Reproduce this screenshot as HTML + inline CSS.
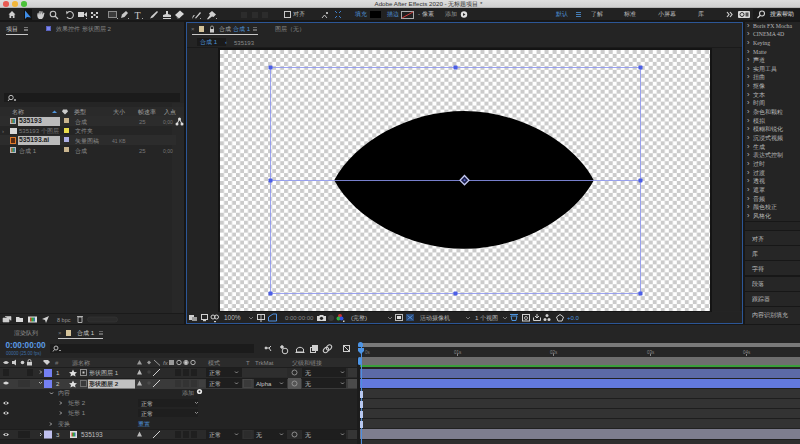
<!DOCTYPE html>
<html><head><meta charset="utf-8">
<style>
*{margin:0;padding:0;box-sizing:border-box}
html,body{width:800px;height:444px;overflow:hidden;background:#171717;font-family:"Liberation Sans",sans-serif;color:#9b9b9b}
.a{position:absolute}
.t{position:absolute;white-space:nowrap;font-size:6.2px;line-height:8px}
.b{color:#4f95dd}
.chk{background:repeating-conic-gradient(#cdcdcd 0 25%,#ffffff 0 50%) 0 0/8px 8px}
</style></head><body>

<!-- title bar -->
<div class="a" style="left:0;top:0;width:800px;height:8px;background:linear-gradient(#dedede,#cdcdcd)"></div><div class="a" style="left:0;top:7px;width:800px;height:1px;background:#b5b5b5"></div>
<div class="a" style="left:3px;top:1px;width:5.6px;height:5.6px;border-radius:50%;background:#e85a52"></div>
<div class="a" style="left:12px;top:1px;width:5.6px;height:5.6px;border-radius:50%;background:#f2b63a"></div>
<div class="a" style="left:21px;top:1px;width:5.6px;height:5.6px;border-radius:50%;background:#4cc23a"></div>
<div class="t" style="left:374.5px;top:-0.5px;font-size:6.2px;line-height:8px;color:#303030">Adobe After Effects 2020 - 无标题项目 *</div>

<!-- toolbar -->
<div class="a" style="left:0;top:8px;width:800px;height:13px;background:#222222"></div>
<div class="a" style="left:0;top:20px;width:800px;height:2px;background:#171717"></div>
<div class="a" style="left:24px;top:9px;width:8px;height:11px;background:#141414"></div>
<div class="a" style="left:753px;top:9px;width:47px;height:11px;background:#1b1b1b"></div>
<svg class="a" style="left:0;top:8px" width="800" height="13" viewBox="0 0 800 13">
 <g fill="#d0d0d0">
  <path d="M8.5,6.5 L12,3 L15.5,6.5 L14.5,6.5 L14.5,10 L12.8,10 L12.8,8 L11.2,8 L11.2,10 L9.5,10 L9.5,6.5Z"/>
 </g>
 <path d="M25,2.5 L25,11 L27,9 L31,9.5Z" fill="#3f8de6"/>
 <path d="M38,10 C37,8 37,5 38.5,4.5 L39,7 L39.5,3 L40.5,3 L40.8,6.5 L41.5,3.2 L42.5,3.3 L42.5,6.8 L43.5,4.5 L44.5,5 L43.5,9 L42,11 L39,11Z" fill="#cfcfcf"/>
 <circle cx="53" cy="6" r="2.8" fill="none" stroke="#c8c8c8" stroke-width="1.1"/><path d="M55,8 L58,11" stroke="#c8c8c8" stroke-width="1.3"/>
 <path d="M67.5,4.5 A3.5,3.5 0 1 1 67,9" fill="none" stroke="#c8c8c8" stroke-width="1.1"/><path d="M66,3 L68.5,4.5 L66.5,6.5Z" fill="#c8c8c8"/>
 <rect x="78" y="4" width="6" height="5" fill="#d6d6d6"/><path d="M84,6.5 L87,4 L87,9Z" fill="#d6d6d6"/><rect x="86" y="10" width="1" height="1" fill="#bbb"/>
 <g fill="#cfcfcf"><rect x="91" y="4" width="2" height="2"/><rect x="96" y="4" width="2" height="2"/><rect x="91" y="8" width="2" height="2"/><rect x="96" y="8" width="2" height="2"/><rect x="93.5" y="6" width="2" height="2"/></g>
 <rect x="108.5" y="3.5" width="8" height="6" fill="#3a3a3a" stroke="#8a8a8a" stroke-width="1"/><rect x="117" y="10" width="1" height="1" fill="#aaa"/>
 <path d="M121,10 L122,6.5 L126,3 L128,5 L124.5,9Z" fill="#c8c8c8"/><rect x="128" y="10" width="1" height="1" fill="#aaa"/>
 <text x="134.5" y="10.5" font-family="Liberation Serif" font-size="10" fill="#c8c8c8">T</text><rect x="142" y="10" width="1" height="1" fill="#aaa"/>
 <path d="M150,10.5 L151.5,8 L157,3 L158,4 L153,9.5Z" fill="#d0d0d0"/>
 <path d="M166,3 L168,3 L168,6 L171,7 L171,9 L163,9 L163,7 L166,6Z" fill="#d0d0d0"/><rect x="163" y="10" width="8" height="1" fill="#d0d0d0"/>
 <path d="M175,7 L180,2.5 L184,6 L179,10.5Z" fill="#d8d8d8"/><path d="M176.5,8.5 L179,10.5 L177,10.5Z" fill="#888"/>
 <path d="M192,11 L194,4 L193,7.5 L195,7 Z M195,10 L200,4 L201,5 L196,10.5Z" fill="#cfcfcf"/><rect x="200" y="10" width="1" height="1" fill="#aaa"/>
 <path d="M207,11 L210,7 L209,5.5 L212,3 L216,6.5 L213.5,9 L212,8.5 L208,11.5Z" fill="#d0d0d0"/><rect x="216" y="10" width="1" height="1" fill="#aaa"/>
 <g fill="#2c2c2c"><rect x="241" y="4" width="6" height="6"/><rect x="252" y="4" width="6" height="6"/><rect x="262" y="4" width="6" height="6"/></g>
 <rect x="284.5" y="3.5" width="6" height="6" fill="none" stroke="#c8c8c8" stroke-width="1"/>
 <path d="M322,10 L324.5,7 L327,10" fill="none" stroke="#c0c0c0" stroke-width="1"/><circle cx="327" cy="5" r="1" fill="#ddd"/>
 <g stroke="#3f7fc8" stroke-width="1"><path d="M335,3 L337,5 M341,3 L339,5 M335,10 L337,8 M341,10 L339,8"/></g>
 <rect x="370" y="3" width="11" height="7" fill="#000"/>
 <rect x="401.5" y="3.5" width="12" height="7" fill="#202020" stroke="#aaa" stroke-width="1"/><path d="M402,10 L413,4" stroke="#d43a3a" stroke-width="1"/>
 <circle cx="464" cy="6.5" r="3.2" fill="#e0e0e0"/><path d="M463,5 L465.5,6.5 L463,8Z" fill="#282828"/>
 <path d="M576,4.5 L581,4.5 M576,6.5 L581,6.5 M576,8.5 L581,8.5" stroke="#4f95dd" stroke-width="0.8"/>
 <path d="M727,4 L729,6.5 L727,9 M730,4 L732,6.5 L730,9" fill="none" stroke="#cfcfcf" stroke-width="1.2"/>
 <rect x="738" y="3" width="12" height="7" fill="#d8d8d8" rx="1"/><circle cx="742" cy="6.5" r="2" fill="none" stroke="#333" stroke-width="1"/><rect x="745.5" y="4.5" width="3" height="4" fill="#555"/>
 <circle cx="762" cy="5.5" r="2.5" fill="none" stroke="#d0d0d0" stroke-width="1.1"/><path d="M760,7.5 L757.5,10" stroke="#d0d0d0" stroke-width="1.3"/>
</g>
</svg>
<div class="t" style="left:293px;top:10px;color:#bdbdbd">对齐</div>
<div class="t b" style="left:355px;top:10px">填充</div>
<div class="t b" style="left:387px;top:10px">描边</div>
<div class="t" style="left:418px;top:10px;color:#bdbdbd">- 像素</div>
<div class="t" style="left:445px;top:10px;color:#9a9a9a">添加</div>
<div class="t b" style="left:556px;top:10px">默认</div>
<div class="t" style="left:591px;top:10px;color:#bdbdbd">了解</div>
<div class="t" style="left:624px;top:10px;color:#bdbdbd">标准</div>
<div class="t" style="left:658px;top:10px;color:#bdbdbd">小屏幕</div>
<div class="t" style="left:698px;top:10px;color:#bdbdbd">库</div>
<div class="t" style="left:769.5px;top:10px;color:#e0e0e0;font-size:6.4px">搜索帮助</div>

<!-- left project panel -->
<div id="proj" class="a" style="left:0;top:22px;width:184px;height:301px;background:#252525"></div><div class="a" style="left:172px;top:103px;width:12px;height:210px;background:#282828"></div>
<div class="t" style="left:6px;top:25px;color:#c8c8c8">项目</div>
<div class="a" style="left:24px;top:27px;width:4px;height:4px;border-top:1px solid #777;border-bottom:1px solid #777"></div>
<div class="a" style="left:24px;top:28.5px;width:4px;height:1px;background:#777"></div>
<div class="a" style="left:6px;top:34px;width:22px;height:1px;background:#c8c8c8"></div>
<div class="a" style="left:46px;top:26px;width:5px;height:5px;background:#7c86f0;border:1px solid #5a63c0"></div>
<div class="t" style="left:56px;top:25px;color:#8a8a8a">效果控件 形状图层 2</div>
<div class="a" style="left:4px;top:93px;width:176px;height:9px;background:#1b1b1b"></div>
<svg class="a" style="left:7px;top:94px" width="12" height="8"><circle cx="4" cy="3.5" r="2.2" fill="none" stroke="#bbb" stroke-width="1"/><path d="M2.5,5 L1,7" stroke="#bbb" stroke-width="1"/><circle cx="8" cy="6" r="1" fill="#bbb"/></svg>
<div class="a" style="left:0;top:107px;width:184px;height:9px;background:#2a2a2a"></div>
<div class="t" style="left:12px;top:107.5px;color:#a0a0a0">名称</div>
<svg class="a" style="left:50px;top:108px" width="20" height="8"><path d="M2,5 L4.5,2.5 L7,5Z" fill="#4f95dd"/><path d="M13,1.5 L17,1.5 L18,3.5 L15,6.5 L12,3.5Z" fill="#ccc"/></svg>
<div class="t" style="left:74px;top:107.5px;color:#a0a0a0">类型</div>
<div class="t" style="left:113px;top:107.5px;color:#a0a0a0">大小</div>
<div class="t" style="left:138px;top:107.5px;color:#a0a0a0">帧速率</div>
<div class="t" style="left:164px;top:107.5px;color:#a0a0a0">入点</div>
<div class="a" style="left:0;top:116px;width:184px;height:10px;background:#2c2c2c"></div>
<div class="a" style="left:0;top:135px;width:176px;height:10px;background:#2c2c2c"></div>
<!-- row1 -->
<div class="a" style="left:10px;top:118px;width:6px;height:6px;background:linear-gradient(90deg,#d65a3c,#3f9a54,#3c6fc4);border:1px solid #bbb"></div>
<div class="a" style="left:18px;top:117px;width:42px;height:9px;background:#bcbcbc"></div>
<div class="t" style="left:19px;top:117px;color:#222;font-weight:bold;font-size:6.8px">535193</div>
<div class="a" style="left:64px;top:118px;width:5px;height:5px;background:#c9b58f"></div>
<div class="t" style="left:75px;top:117.5px;color:#8a8a8a">合成</div>
<div class="t" style="left:139px;top:117.5px;color:#777;font-size:6px">25</div>
<div class="t" style="left:163px;top:117.5px;color:#777;font-size:5px">0;00</div>
<svg class="a" style="left:175px;top:117px" width="9" height="9"><circle cx="4.5" cy="2" r="1.5" fill="#ddd"/><circle cx="2" cy="7" r="1.5" fill="#ddd"/><circle cx="7" cy="7" r="1.5" fill="#ddd"/><path d="M4.5,2 L2,7 M4.5,2 L7,7" stroke="#ddd"/></svg>
<!-- row2 -->
<div class="t" style="left:2px;top:127px;color:#777;font-size:6px">›</div>
<div class="a" style="left:10px;top:128px;width:7px;height:6px;background:#d8d8d8"></div>
<div class="t" style="left:19px;top:127px;color:#7a7a7a;font-size:6px">535193 个图层</div>
<div class="a" style="left:64px;top:128px;width:5px;height:5px;background:#e8dc4c"></div>
<div class="t" style="left:75px;top:127px;color:#8a8a8a">文件夹</div>
<!-- row3 -->
<div class="a" style="left:10px;top:137px;width:6px;height:7px;background:#5a2a10;border:1px solid #e07a2a"></div>
<div class="a" style="left:18px;top:136px;width:42px;height:9px;background:#bcbcbc"></div>
<div class="t" style="left:19px;top:136px;color:#222;font-weight:bold;font-size:6.8px">535193.ai</div>
<div class="a" style="left:64px;top:137px;width:5px;height:5px;background:#aeb0e6"></div>
<div class="t" style="left:75px;top:136.5px;color:#8a8a8a">矢量图稿</div>
<div class="t" style="left:112px;top:137px;color:#777;font-size:5px">41 KB</div>
<!-- row4 -->
<div class="a" style="left:10px;top:147px;width:6px;height:6px;background:linear-gradient(90deg,#d65a3c,#3f9a54,#3c6fc4);border:1px solid #bbb"></div>
<div class="t" style="left:19px;top:146.5px;color:#8a8a8a">合成 1</div>
<div class="a" style="left:64px;top:147px;width:5px;height:5px;background:#c9b58f"></div>
<div class="t" style="left:75px;top:146.5px;color:#8a8a8a">合成</div>
<div class="t" style="left:139px;top:146.5px;color:#777;font-size:6px">25</div>
<div class="t" style="left:163px;top:146.5px;color:#777;font-size:5px">0;00</div>
<!-- bottom toolbar -->
<div class="a" style="left:0;top:313px;width:184px;height:11px;background:#242424;border-top:1px solid #1a1a1a"></div>
<svg class="a" style="left:0;top:313.5px" width="184" height="10">
 <path d="M3,4 L9,4 L9,8 L3,8Z M5,2.5 L11,2.5 L11,6.5" fill="#cfcfcf" stroke="#cfcfcf" stroke-width="0.6"/>
 <path d="M16,3 L19,3 L20,4 L23,4 L23,8 L16,8Z" fill="#d8d8d8"/>
 <rect x="28" y="2.5" width="9" height="6" fill="#ddd"/><rect x="30" y="3.5" width="5" height="4" fill="url(#rgb)"/>
 <defs><linearGradient id="rgb"><stop offset="0" stop-color="#d33"/><stop offset=".5" stop-color="#3a3"/><stop offset="1" stop-color="#36c"/></linearGradient></defs>
 <path d="M42,5 L49,2 L46,9 L45,6Z" fill="#d0d0d0"/>
 <text x="57" y="7.5" font-size="5.5" fill="#999" font-family="Liberation Sans">8 bpc</text>
 <path d="M78,3 L82,3 L82,8.5 L78,8.5Z M77,2.5 L83,2.5" fill="none" stroke="#bbb" stroke-width="0.9"/>
 <rect x="87.5" y="3" width="30" height="5" rx="2.5" fill="#2b2b2b" stroke="#363636" stroke-width="0.6"/>
</svg>

<!-- comp panel -->
<div id="comp" class="a" style="left:186px;top:22px;width:557px;height:302px;background:#242424;border:1px solid #2c5696"></div>
<div class="a" style="left:187px;top:48px;width:555px;height:263px;background:#232323"></div><div class="a" style="left:740px;top:48px;width:2px;height:263px;background:#1e1e1e"></div>
<div class="a" style="left:218px;top:48px;width:494px;height:265px;background:#141414"></div>
<svg class="a" style="left:220px;top:50px" width="490" height="261"><defs><pattern id="ck" x="0" y="0" width="8.014" height="7.94" patternUnits="userSpaceOnUse"><rect width="8.014" height="7.94" fill="#fff"/><rect x="4.007" y="0" width="4.007" height="3.97" fill="#cbcbcb"/><rect x="0" y="3.97" width="4.007" height="3.97" fill="#cbcbcb"/></pattern></defs><rect width="490" height="261" fill="url(#ck)"/></svg>
<div class="a" style="left:187px;top:47px;width:555px;height:1px;background:#1a1a1a"></div>
<div class="t" style="left:191px;top:25px;color:#777;font-size:6px">×</div>
<div class="a" style="left:199px;top:26px;width:5px;height:6px;background:#d6c49a"></div>
<svg class="a" style="left:209px;top:25px" width="6" height="8"><path d="M1.5,4 L1.5,2.5 A1.5,1.5 0 0 1 4.5,2.5 L4.5,4" fill="none" stroke="#bbb" stroke-width="0.8"/><rect x="1" y="4" width="4" height="3.5" fill="#ccc"/></svg>
<div class="t" style="left:219px;top:25px;color:#a8a8a8">合成</div>
<div class="t b" style="left:233px;top:25px">合成 1</div>
<div class="a" style="left:253px;top:27px;width:4px;height:4px;border-top:1px solid #666;border-bottom:1px solid #666"></div>
<div class="a" style="left:253px;top:28.5px;width:4px;height:1px;background:#666"></div>
<div class="a" style="left:192px;top:34px;width:66px;height:1px;background:#c8c8c8"></div>
<div class="t" style="left:275px;top:25px;color:#8a8a8a">图层（无）</div>
<div class="a" style="left:197px;top:38px;width:29px;height:8px;background:#1a1a1a"></div>
<div class="t b" style="left:200px;top:38px">合成 1</div>
<div class="t b" style="left:225px;top:38px;font-size:6px">‹</div>
<div class="t" style="left:234px;top:38.5px;color:#8a8a8a;font-size:6px">535193</div>
<!-- viewer toolbar -->
<div class="a" style="left:187px;top:312px;width:555px;height:11px;background:#232323"></div>
<svg class="a" style="left:187px;top:311.5px" width="555" height="11">
 <g fill="#cfcfcf" stroke="none">
  <path d="M2,3 L7,3 L7,8 L2,8Z"/><path d="M5,5 L10,5 L10,9 L5,9Z" fill="#9a9a9a"/>
  <rect x="14.5" y="2.5" width="6" height="5" fill="none" stroke="#cfcfcf" stroke-width="1"/><rect x="16" y="8" width="3" height="1.2"/>
  <circle cx="26" cy="5" r="2" fill="none" stroke="#cfcfcf" stroke-width="1"/><circle cx="29.5" cy="5" r="2" fill="none" stroke="#cfcfcf" stroke-width="1"/><rect x="27" y="9" width="2" height="1.2"/>
 </g>
 <path d="M62,5 L64,7 L66,5" fill="none" stroke="#8a8a8a" stroke-width="0.8"/>
 <rect x="70.5" y="2.5" width="7" height="5" fill="none" stroke="#cfcfcf" stroke-width="1"/><path d="M74,2.5 L74,7.5" stroke="#cfcfcf" stroke-width="0.8"/><rect x="73" y="8.5" width="2" height="1" fill="#ccc"/>
 <path d="M81.5,9 L81.5,5 L86,2 L89.5,2 L89.5,9Z" fill="none" stroke="#4f8fdd" stroke-width="1"/>
 <path d="M130,4 L132,4 L133,3 L136,3 L137,4 L139,4 L139,9 L130,9Z" fill="#d8d8d8"/><circle cx="134.5" cy="6.3" r="1.6" fill="#232323"/>
 <circle cx="144" cy="6" r="3" fill="#3a3a3a"/>
 <circle cx="153" cy="4" r="2" fill="#d03030"/><circle cx="151.5" cy="6.5" r="2" fill="#30b040"/><circle cx="154.5" cy="6.5" r="2" fill="#3050e0"/><rect x="156" y="8.5" width="1.5" height="1.5" fill="#ccc"/>
 <path d="M201,5 L203,7 L205,5" fill="none" stroke="#8a8a8a" stroke-width="0.8"/>
 <rect x="208.5" y="2.5" width="7" height="6" fill="none" stroke="#bbb" stroke-width="1"/><rect x="210" y="4" width="4" height="3" fill="#ddd"/>
 <rect x="219" y="2" width="8" height="7" fill="#2a4a78"/><path d="M220.5,3.5 L225.5,7.5 M225.5,3.5 L220.5,7.5" stroke="#5fa0e8" stroke-width="0.8"/>
 <path d="M279,5 L281,7 L283,5" fill="none" stroke="#8a8a8a" stroke-width="0.8"/>
 <path d="M316,5 L318,7 L320,5" fill="none" stroke="#8a8a8a" stroke-width="0.8"/>
 <path d="M323,2.5 L331,2.5 M324,4 L330,4 L329,8.5 L325,8.5Z" fill="none" stroke="#4f95dd" stroke-width="1"/>
 <rect x="335.5" y="2.5" width="7" height="6.5" fill="none" stroke="#d0d0d0" stroke-width="1"/><circle cx="339" cy="6" r="1.5" fill="none" stroke="#d0d0d0" stroke-width="0.8"/>
 <path d="M346.5,5.5 L346.5,8.5 L353.5,8.5 L353.5,5.5 M350,2 L350,6 M348,4 L350,6 L352,4" fill="none" stroke="#d0d0d0" stroke-width="1"/>
 <circle cx="360" cy="3.5" r="1.5" fill="#d0d0d0"/><circle cx="358" cy="7.5" r="1.5" fill="#d0d0d0"/><circle cx="362" cy="7.5" r="1.5" fill="#d0d0d0"/>
 <path d="M373,2.5 L376.5,5 L375,9 L371,9 L369.5,5Z" fill="none" stroke="#d0d0d0" stroke-width="1"/>
</svg>
<div class="t" style="left:224px;top:313.5px;color:#bbb;font-size:6.5px">100%</div>
<div class="t" style="left:285px;top:313.5px;color:#8a8a8a;font-size:6px">0:00:00:00</div>
<div class="t" style="left:351px;top:313.5px;color:#bbb">(完整)</div>
<div class="t" style="left:420px;top:313.5px;color:#bbb">活动摄像机</div>
<div class="t" style="left:475px;top:313.5px;color:#bbb">1 个视图</div>
<div class="t b" style="left:567px;top:313.5px;font-size:6px">+0.0</div>
<svg class="a" style="left:0;top:0" width="800" height="444">
<path d="M334.2,180.2 C354.8,141.5 409.2,111 464,111 C518.8,111 573.2,141.5 593.8,180.2 C573.2,218.6 518.8,248.8 464,248.8 C409.2,248.8 354.8,218.6 334.2,180.2 Z" fill="#000"/>
<g stroke="#8c95f0" stroke-opacity="0.85" stroke-width="1" fill="none">
<rect x="270.5" y="67.5" width="370" height="226"/>
<line x1="270.5" y1="180.5" x2="640.5" y2="180.5"/>
</g>
<g fill="#4b5ee6">
<rect x="268.5" y="65.5" width="4" height="4" rx="0.8"/><rect x="453.5" y="65.5" width="4" height="4" rx="0.8"/><rect x="638.5" y="65.5" width="4" height="4" rx="0.8"/>
<rect x="268.5" y="178.5" width="4" height="4" rx="0.8"/><rect x="638.5" y="178.5" width="4" height="4" rx="0.8"/>
<rect x="268.5" y="291.5" width="4" height="4" rx="0.8"/><rect x="453.5" y="291.5" width="4" height="4" rx="0.8"/><rect x="638.5" y="291.5" width="4" height="4" rx="0.8"/>
</g>
<path d="M464.5,175.5 L469,180.2 L464.5,184.8 L460,180.2 Z" fill="#1a1f4a" stroke="#c4c8f2" stroke-width="1.3"/><circle cx="464.5" cy="180.2" r="1" fill="#5a66d0"/>
</svg>

<!-- right panel -->
<div id="right" class="a" style="left:745px;top:22px;width:55px;height:199px;background:#242424"></div>
<div class="a" style="left:745px;top:222px;width:55px;height:8px;background:#232323"></div>
<div class="t" style="left:747px;top:21.5px;color:#bbbbbb;font-size:7.5px">›</div>
<div class="t" style="left:753px;top:21.5px;color:#b8b8b8;font-size:5.8px;font-family:'Liberation Serif',serif">Boris FX Mocha</div>
<div class="t" style="left:747px;top:30.1px;color:#bbbbbb;font-size:7.5px">›</div>
<div class="t" style="left:753px;top:30.1px;color:#b8b8b8;font-size:5.8px;font-family:'Liberation Serif',serif">CINEMA 4D</div>
<div class="t" style="left:747px;top:38.8px;color:#bbbbbb;font-size:7.5px">›</div>
<div class="t" style="left:753px;top:38.8px;color:#b8b8b8;font-size:5.8px;font-family:'Liberation Serif',serif">Keying</div>
<div class="t" style="left:747px;top:47.5px;color:#bbbbbb;font-size:7.5px">›</div>
<div class="t" style="left:753px;top:47.5px;color:#b8b8b8;font-size:5.8px;font-family:'Liberation Serif',serif">Matte</div>
<div class="t" style="left:747px;top:56.1px;color:#bbbbbb;font-size:7.5px">›</div>
<div class="t" style="left:753px;top:56.1px;color:#b8b8b8;font-size:5.8px;font-family:'Liberation Serif',serif">声道</div>
<div class="t" style="left:747px;top:64.7px;color:#bbbbbb;font-size:7.5px">›</div>
<div class="t" style="left:753px;top:64.7px;color:#b8b8b8;font-size:5.8px;font-family:'Liberation Serif',serif">实用工具</div>
<div class="t" style="left:747px;top:73.4px;color:#bbbbbb;font-size:7.5px">›</div>
<div class="t" style="left:753px;top:73.4px;color:#b8b8b8;font-size:5.8px;font-family:'Liberation Serif',serif">扭曲</div>
<div class="t" style="left:747px;top:82.1px;color:#bbbbbb;font-size:7.5px">›</div>
<div class="t" style="left:753px;top:82.1px;color:#b8b8b8;font-size:5.8px;font-family:'Liberation Serif',serif">抠像</div>
<div class="t" style="left:747px;top:90.7px;color:#bbbbbb;font-size:7.5px">›</div>
<div class="t" style="left:753px;top:90.7px;color:#b8b8b8;font-size:5.8px;font-family:'Liberation Serif',serif">文本</div>
<div class="t" style="left:747px;top:99.4px;color:#bbbbbb;font-size:7.5px">›</div>
<div class="t" style="left:753px;top:99.4px;color:#b8b8b8;font-size:5.8px;font-family:'Liberation Serif',serif">时间</div>
<div class="t" style="left:747px;top:108.0px;color:#bbbbbb;font-size:7.5px">›</div>
<div class="t" style="left:753px;top:108.0px;color:#b8b8b8;font-size:5.8px;font-family:'Liberation Serif',serif">杂色和颗粒</div>
<div class="t" style="left:747px;top:116.7px;color:#bbbbbb;font-size:7.5px">›</div>
<div class="t" style="left:753px;top:116.7px;color:#b8b8b8;font-size:5.8px;font-family:'Liberation Serif',serif">模拟</div>
<div class="t" style="left:747px;top:125.3px;color:#bbbbbb;font-size:7.5px">›</div>
<div class="t" style="left:753px;top:125.3px;color:#b8b8b8;font-size:5.8px;font-family:'Liberation Serif',serif">模糊和锐化</div>
<div class="t" style="left:747px;top:133.9px;color:#bbbbbb;font-size:7.5px">›</div>
<div class="t" style="left:753px;top:133.9px;color:#b8b8b8;font-size:5.8px;font-family:'Liberation Serif',serif">沉浸式视频</div>
<div class="t" style="left:747px;top:142.6px;color:#bbbbbb;font-size:7.5px">›</div>
<div class="t" style="left:753px;top:142.6px;color:#b8b8b8;font-size:5.8px;font-family:'Liberation Serif',serif">生成</div>
<div class="t" style="left:747px;top:151.3px;color:#bbbbbb;font-size:7.5px">›</div>
<div class="t" style="left:753px;top:151.3px;color:#b8b8b8;font-size:5.8px;font-family:'Liberation Serif',serif">表达式控制</div>
<div class="t" style="left:747px;top:159.9px;color:#bbbbbb;font-size:7.5px">›</div>
<div class="t" style="left:753px;top:159.9px;color:#b8b8b8;font-size:5.8px;font-family:'Liberation Serif',serif">过时</div>
<div class="t" style="left:747px;top:168.6px;color:#bbbbbb;font-size:7.5px">›</div>
<div class="t" style="left:753px;top:168.6px;color:#b8b8b8;font-size:5.8px;font-family:'Liberation Serif',serif">过渡</div>
<div class="t" style="left:747px;top:177.2px;color:#bbbbbb;font-size:7.5px">›</div>
<div class="t" style="left:753px;top:177.2px;color:#b8b8b8;font-size:5.8px;font-family:'Liberation Serif',serif">透视</div>
<div class="t" style="left:747px;top:185.8px;color:#bbbbbb;font-size:7.5px">›</div>
<div class="t" style="left:753px;top:185.8px;color:#b8b8b8;font-size:5.8px;font-family:'Liberation Serif',serif">遮罩</div>
<div class="t" style="left:747px;top:194.5px;color:#bbbbbb;font-size:7.5px">›</div>
<div class="t" style="left:753px;top:194.5px;color:#b8b8b8;font-size:5.8px;font-family:'Liberation Serif',serif">音频</div>
<div class="t" style="left:747px;top:203.2px;color:#bbbbbb;font-size:7.5px">›</div>
<div class="t" style="left:753px;top:203.2px;color:#b8b8b8;font-size:5.8px;font-family:'Liberation Serif',serif">颜色校正</div>
<div class="t" style="left:747px;top:211.8px;color:#bbbbbb;font-size:7.5px">›</div>
<div class="t" style="left:753px;top:211.8px;color:#b8b8b8;font-size:5.8px;font-family:'Liberation Serif',serif">风格化</div>
<div class="a" style="left:745px;top:231.0px;width:55px;height:14px;background:#262626"></div>
<div class="t" style="left:752px;top:234.5px;color:#c0c0c0">对齐</div>
<div class="a" style="left:745px;top:246.2px;width:55px;height:14px;background:#262626"></div>
<div class="t" style="left:752px;top:249.7px;color:#c0c0c0">库</div>
<div class="a" style="left:745px;top:261.4px;width:55px;height:14px;background:#262626"></div>
<div class="t" style="left:752px;top:264.9px;color:#c0c0c0">字符</div>
<div class="a" style="left:745px;top:276.6px;width:55px;height:14px;background:#262626"></div>
<div class="t" style="left:752px;top:280.1px;color:#c0c0c0">段落</div>
<div class="a" style="left:745px;top:291.8px;width:55px;height:14px;background:#262626"></div>
<div class="t" style="left:752px;top:295.3px;color:#c0c0c0">跟踪器</div>
<div class="a" style="left:745px;top:307.0px;width:55px;height:17px;background:#262626"></div>
<div class="t" style="left:752px;top:310.5px;color:#c0c0c0">内容识别填充</div>

<!-- timeline -->
<div id="tl" class="a" style="left:0;top:325px;width:800px;height:119px;background:#252525"></div>
<div class="t" style="left:14px;top:329px;color:#9a9a9a">渲染队列</div>
<div class="t" style="left:58px;top:329px;color:#777;font-size:6px">×</div>
<div class="a" style="left:66px;top:330px;width:5px;height:6px;background:#d6c49a"></div>
<div class="t" style="left:77px;top:329px;color:#c8c8c8">合成 1</div>
<div class="a" style="left:99px;top:331px;width:4px;height:4px;border-top:1px solid #666;border-bottom:1px solid #666"></div>
<div class="a" style="left:99px;top:332.5px;width:4px;height:1px;background:#666"></div>
<div class="a" style="left:58px;top:338px;width:45px;height:1px;background:#c8c8c8"></div>
<div class="t" style="left:5.5px;top:341px;color:#5b9be6;font-size:8.2px;line-height:10px;font-weight:bold">0:00:00:00</div>
<div class="t" style="left:6px;top:350.5px;color:#3f6fa8;font-size:4.5px;line-height:5px">00000 (25.00 fps)</div>
<div class="a" style="left:50px;top:344px;width:204px;height:9px;background:#1b1b1b"></div>
<svg class="a" style="left:52px;top:345px" width="12" height="8"><circle cx="4" cy="3" r="2" fill="none" stroke="#bbb" stroke-width="1"/><path d="M2.5,4.5 L1,6.5" stroke="#bbb" stroke-width="1"/><path d="M7,5 L8,6 L9,5" fill="none" stroke="#bbb" stroke-width="0.8"/></svg>
<svg class="a" style="left:255px;top:341.5px" width="103" height="17">
 <g fill="none" stroke="#cfcfcf" stroke-width="1">
  <path d="M10,6 L14,6 L16,9 M14,6 L16,4"/><circle cx="11" cy="6" r="1" fill="#cfcfcf"/>
  <circle cx="30" cy="9" r="2.8"/><circle cx="27" cy="5" r="1.3" fill="#cfcfcf"/>
  <path d="M41.5,10 L41.5,7 Q45,3.5 48.5,7 L48.5,10Z"/><path d="M40.5,10.5 L49.5,10.5"/>
  <rect x="55.5" y="5.5" width="5" height="5"/><rect x="57.5" y="3.5" width="5" height="5" fill="#cfcfcf"/>
  <ellipse cx="71" cy="8" rx="2.2" ry="3" transform="rotate(45 71 8)"/><ellipse cx="74" cy="5.5" rx="2.2" ry="3" transform="rotate(45 74 5.5)"/>
  <rect x="88.5" y="3.5" width="6" height="6"/><path d="M89,4 L94,9"/>
 </g>
</svg>
<!-- header row -->
<div class="a" style="left:0;top:358px;width:357px;height:9px;background:#2b2b2b"></div>
<svg class="a" style="left:0;top:358px" width="357" height="9">
 <g fill="#cfcfcf">
  <path d="M3,4.5 Q6,1.5 9,4.5 Q6,7.5 3,4.5Z"/>
  <path d="M12,3 L14,3 L16,1.5 L16,7.5 L14,6 L12,6Z"/>
  <circle cx="22.5" cy="4.5" r="1.8"/>
  <rect x="27" y="4" width="5" height="3.5"/>
  <path d="M44,2 L48,2 L50,4 L47,7 L43,3Z"/>
 </g>
 <path d="M28,4 L28,3 A1.5,1.5 0 0 1 31,3 L31,4" fill="none" stroke="#cfcfcf" stroke-width="0.8"/>
 <g fill="#9a9a9a"><path d="M137,6.5 L139.5,2 L142,6.5Z"/><path d="M147,4.5 L149,2.5 L151,4.5 L149,6.5Z"/><path d="M154,2 L160,7.5" stroke="#9a9a9a" stroke-width="1"/>
 <rect x="169" y="2" width="5" height="5"/></g>
 <g fill="none" stroke="#bbb" stroke-width="0.9"><circle cx="179" cy="4.5" r="2.2"/><circle cx="186" cy="4.5" r="2.2"/><circle cx="193" cy="4.5" r="2.2"/></g>
 <circle cx="186" cy="4.5" r="1.6" fill="#ccc"/>
</svg>
<div class="t" style="left:55px;top:358.5px;color:#777;font-size:6px">#</div>
<div class="t" style="left:72px;top:358.5px;color:#8a8a8a">源名称</div>
<div class="t" style="left:163px;top:358.5px;color:#9a9a9a;font-size:6px;font-style:italic">fx</div>
<div class="t" style="left:208px;top:358.5px;color:#8a8a8a">模式</div>
<div class="t" style="left:246px;top:358.5px;color:#8a8a8a;font-size:6px">T</div>
<div class="t" style="left:255px;top:358.5px;color:#8a8a8a;font-size:6px">TrkMat</div>
<div class="t" style="left:292px;top:358.5px;color:#8a8a8a">父级和链接</div>
<!-- layer rows left -->
<div class="a" style="left:0;top:367px;width:357px;height:11px;background:#2a2a2a;border-top:1px solid #1d1d1d"></div>
<div class="a" style="left:0;top:378px;width:357px;height:11px;background:#3a3a3a;border-top:1px solid #1d1d1d"></div>
<div class="a" style="left:0;top:389px;width:357px;height:55px;background:#232323"></div>
<div class="a" style="left:0;top:429px;width:357px;height:10px;background:#2a2a2a;border-top:1px solid #1d1d1d"></div>
<div class="a" style="left:0;top:439px;width:357px;height:5px;background:#232323;border-top:1px solid #1d1d1d"></div>
<svg class="a" style="left:0;top:367px" width="357" height="77">
 <g fill="#1f1f1f">
  <rect x="3" y="2" width="6" height="7"/><rect x="27" y="2" width="6" height="7"/>
  <rect x="18" y="13" width="6" height="7" fill="#333"/><rect x="24" y="13" width="6" height="7" fill="#333"/>
  <rect x="18" y="64" width="6" height="7"/><rect x="24" y="64" width="6" height="7"/>
 </g>
 <g fill="#d8d8d8">
  <path d="M3,16 Q6,13 9,16 Q6,19 3,16Z"/>
  <path d="M3,36 Q6,33 9,36 Q6,39 3,36Z"/><circle cx="6" cy="36" r="1" fill="#222"/>
  <path d="M3,46 Q6,43 9,46 Q6,49 3,46Z"/><circle cx="6" cy="46" r="1" fill="#222"/>
  <path d="M3,67.5 Q6,64.5 9,67.5 Q6,70.5 3,67.5Z"/><circle cx="6" cy="67.5" r="1" fill="#222"/>
 </g>
 <g fill="none" stroke="#b4b4b4" stroke-width="1">
  <path d="M40,3.5 L41.5,5 L40,6.5"/><path d="M39,15 L40.5,16.5 L42,15"/>
  <path d="M50,25.5 L51.5,27 L53,25.5"/><path d="M60,34.5 L61.5,36 L60,37.5"/><path d="M60,44.5 L61.5,46 L60,47.5"/>
  <path d="M50,55.5 L51.5,57 L50,58.5"/><path d="M40,66 L41.5,67.5 L40,69"/>
 </g>
 <rect x="44" y="2" width="8" height="8" fill="#7580f2"/>
 <rect x="44" y="13" width="8" height="8" fill="#7580f2"/>
 <rect x="44" y="63.5" width="8" height="8" fill="#c0c0ee"/>
 <g fill="#e0e0e0">
  <path d="M73,2.5 L74.2,5 L77,5.2 L75,7 L75.6,9.5 L73,8.2 L70.4,9.5 L71,7 L69,5.2 L71.8,5Z"/>
  <path d="M73,13.5 L74.2,16 L77,16.2 L75,18 L75.6,20.5 L73,19.2 L70.4,20.5 L71,18 L69,16.2 L71.8,16Z"/>
 </g>
 <rect x="80.5" y="2.5" width="6" height="6" fill="none" stroke="#999" stroke-width="0.9"/><rect x="82.5" y="4.5" width="2" height="2" fill="#ccc"/>
 <rect x="80.5" y="13.5" width="6" height="6" fill="none" stroke="#777" stroke-width="0.9"/>
 <rect x="70" y="64" width="7" height="7" fill="#ddd"/><rect x="71.5" y="65.5" width="4" height="4" fill="url(#rgb2)"/>
 <defs><linearGradient id="rgb2"><stop offset="0" stop-color="#d33"/><stop offset=".5" stop-color="#3a3"/><stop offset="1" stop-color="#36c"/></linearGradient></defs>
 <!-- name highlight -->
 <rect x="88" y="12.5" width="47" height="9" fill="#c2c2c2"/>
 <!-- switches -->
 <g fill="#bbb"><path d="M137,7.5 L139.5,2.5 L142,7.5Z"/><path d="M137,18.5 L139.5,13.5 L142,18.5Z"/><path d="M137,69.5 L139.5,64.5 L142,69.5Z"/></g>
 <g fill="#3e3e3e"><circle cx="149" cy="5" r="1.8"/><circle cx="149" cy="16" r="1.8" fill="#4a4a4a"/></g>
 <g stroke="#d0d0d0" stroke-width="1"><path d="M153,9 L160,2"/><path d="M153,20 L160,13"/><path d="M153,71 L160,64"/></g>
 <g fill="#1f1f1f">
  <rect x="175" y="2" width="6" height="7"/><rect x="183" y="2" width="6" height="7"/><rect x="191" y="2" width="6" height="7"/>
  <rect x="175" y="13" width="6" height="7" fill="#333"/><rect x="183" y="13" width="6" height="7" fill="#333"/><rect x="191" y="13" width="6" height="7" fill="#333"/><rect x="199" y="13" width="6" height="7" fill="#3f3f3f"/>
  <rect x="175" y="64" width="6" height="7"/><rect x="183" y="64" width="6" height="7"/><rect x="191" y="64" width="6" height="7"/>
 </g>
 <!-- mode dropdowns -->
 <g fill="#1e1e1e"><rect x="206" y="1" width="36" height="9"/><rect x="206" y="12" width="36" height="9"/><rect x="206" y="63" width="36" height="9"/>
  <rect x="138" y="32" width="60" height="8"/><rect x="138" y="42" width="60" height="8"/>
  <rect x="302" y="1" width="44" height="9"/><rect x="302" y="12" width="44" height="9"/><rect x="302" y="63" width="44" height="9"/>
  <rect x="254" y="12" width="33" height="9"/><rect x="254" y="63" width="33" height="9"/>
  <rect x="242" y="1" width="45" height="9" fill="#2e2e2e"/>
 </g>
 <rect x="243.5" y="12.5" width="8.5" height="8" fill="#3a3a3a" stroke="#4a4a4a" stroke-width="0.8"/>
 <rect x="243.5" y="63.5" width="8.5" height="8" fill="#2c2c2c" stroke="#333" stroke-width="0.8"/>
 <rect x="288" y="11" width="13" height="11" fill="#555"/>
 <g fill="none" stroke="#999" stroke-width="0.9"><circle cx="294.5" cy="5.5" r="2.5"/><circle cx="294.5" cy="16.5" r="2.5"/><circle cx="294.5" cy="67.5" r="2.5"/></g>
 <g fill="none" stroke="#aaa" stroke-width="0.8">
  <path d="M235,4.5 L236.5,6 L238,4.5"/><path d="M235,15.5 L236.5,17 L238,15.5"/><path d="M235,66.5 L236.5,68 L238,66.5"/>
  <path d="M195,35 L196.5,36.5 L198,35"/><path d="M195,45 L196.5,46.5 L198,45"/>
  <path d="M280,15.5 L281.5,17 L283,15.5"/><path d="M280,66.5 L281.5,68 L283,66.5"/>
  <path d="M341,4.5 L342.5,6 L344,4.5"/><path d="M341,15.5 L342.5,17 L344,15.5"/><path d="M341,66.5 L342.5,68 L344,66.5"/>
 </g>
 <rect x="348" y="1" width="9" height="9" fill="#353535"/><rect x="348" y="12" width="9" height="9" fill="#4a4a4a"/><rect x="348" y="63" width="9" height="9" fill="#353535"/>
 <circle cx="199.5" cy="24.5" r="2.6" fill="#e8e8e8"/><circle cx="199.5" cy="24.5" r="1" fill="#333"/>
</svg>
<div class="t" style="left:56px;top:369px;color:#c8c8c8">1</div>
<div class="t" style="left:89px;top:369px;color:#bdbdbd">形状图层 1</div>
<div class="t" style="left:56px;top:380px;color:#c8c8c8">2</div>
<div class="t" style="left:89px;top:380px;color:#2a2a2a;font-weight:bold">形状图层 2</div>
<div class="t" style="left:58px;top:389px;color:#8c8c8c">内容</div>
<div class="t" style="left:68px;top:399px;color:#8c8c8c">矩形 2</div>
<div class="t" style="left:68px;top:409px;color:#8c8c8c">矩形 1</div>
<div class="t" style="left:58px;top:420px;color:#8c8c8c">变换</div>
<div class="t" style="left:56px;top:430.5px;color:#c8c8c8">3</div>
<div class="t" style="left:81px;top:430.5px;color:#bdbdbd;font-size:6.5px">535193</div>
<div class="t" style="left:182px;top:389px;color:#8c8c8c">添加</div>
<div class="t" style="left:141px;top:399.5px;color:#c8c8c8">正常</div>
<div class="t" style="left:141px;top:409.5px;color:#c8c8c8">正常</div>
<div class="t b" style="left:138px;top:420px">重置</div>
<div class="t" style="left:209px;top:369px;color:#c8c8c8">正常</div>
<div class="t" style="left:209px;top:380px;color:#c8c8c8">正常</div>
<div class="t" style="left:209px;top:431px;color:#c8c8c8">正常</div>
<div class="t" style="left:256px;top:380px;color:#c8c8c8;font-size:6px">Alpha</div>
<div class="t" style="left:256px;top:431px;color:#c8c8c8">无</div>
<div class="t" style="left:305px;top:369px;color:#c8c8c8">无</div>
<div class="t" style="left:305px;top:380px;color:#c8c8c8">无</div>
<div class="t" style="left:305px;top:431px;color:#c8c8c8">无</div>
<!-- graph -->
<div class="a" style="left:357px;top:340px;width:443px;height:104px;background:#252525"></div><div class="a" style="left:357px;top:357px;width:3px;height:87px;background:#1c1c1c"></div>
<div class="a" style="left:360px;top:342.5px;width:440px;height:4.5px;background:#7a7a7a"></div>
<div class="a" style="left:358px;top:341.5px;width:5px;height:6px;border-radius:3px;background:#4d95e6"></div>
<div class="a" style="left:358px;top:347px;width:442px;height:11px;background:#262626"></div>
<div class="a" style="left:360px;top:357px;width:440px;height:8px;background:#6e6e6e"></div>
<div class="a" style="left:360px;top:365px;width:440px;height:2px;background:#3a9e3a"></div>
<div class="a" style="left:360px;top:367.5px;width:440px;height:10.5px;background:#5c6aa6;border-top:1px solid #222"></div>
<div class="a" style="left:360px;top:378px;width:440px;height:11px;background:#6279de;border-top:1px solid #222"></div>
<div class="a" style="left:360px;top:388px;width:440px;height:10px;background:#333333;border-top:1px solid #1e1e1e"></div>
<div class="a" style="left:360px;top:398px;width:440px;height:10px;background:#333333;border-top:1px solid #1e1e1e"></div>
<div class="a" style="left:360px;top:408px;width:440px;height:10px;background:#333333;border-top:1px solid #1e1e1e"></div>
<div class="a" style="left:360px;top:418px;width:440px;height:10px;background:#333333;border-top:1px solid #1e1e1e"></div>
<div class="a" style="left:360px;top:428px;width:440px;height:11px;background:#7d7d8e;border-top:1px solid #222"></div>
<div class="a" style="left:360px;top:439px;width:440px;height:5px;background:#2e2e2e;border-top:1px solid #1e1e1e"></div>
<div class="a" style="left:360.5px;top:347px;width:1px;height:97px;background:#4d8fe0"></div>
<svg class="a" style="left:356px;top:347px" width="12" height="10"><path d="M2,1 L8,1 L8,4 L5,7 L2,4Z" fill="#4d95e6"/></svg>
<div class="a" style="left:358px;top:357px;width:3px;height:8px;border-radius:1.5px;background:#4d95e6"></div>
<div class="t" style="left:365px;top:349px;color:#777;font-size:4.5px">0s</div>
<div class="t" style="left:454px;top:349px;color:#888;font-size:4.5px">01s</div>
<div class="t" style="left:550px;top:349px;color:#888;font-size:4.5px">02s</div>
<div class="t" style="left:647px;top:349px;color:#888;font-size:4.5px">03s</div>
<div class="t" style="left:743px;top:349px;color:#888;font-size:4.5px">04s</div>
<div class="a" style="left:457px;top:354px;width:1px;height:2px;background:#888"></div>
<div class="a" style="left:553px;top:354px;width:1px;height:2px;background:#888"></div>
<div class="a" style="left:650px;top:354px;width:1px;height:2px;background:#888"></div>
<div class="a" style="left:746px;top:354px;width:1px;height:2px;background:#888"></div>
<g></g>
<div class="a" style="left:360px;top:390.5px;width:3px;height:7px;background:#b8c8f0"></div>
<div class="a" style="left:360px;top:400.5px;width:3px;height:7px;background:#b8c8f0"></div>
<div class="a" style="left:360px;top:410.5px;width:3px;height:7px;background:#b8c8f0"></div>
<div class="a" style="left:360px;top:420.5px;width:3px;height:7px;background:#b8c8f0"></div>

</body></html>
